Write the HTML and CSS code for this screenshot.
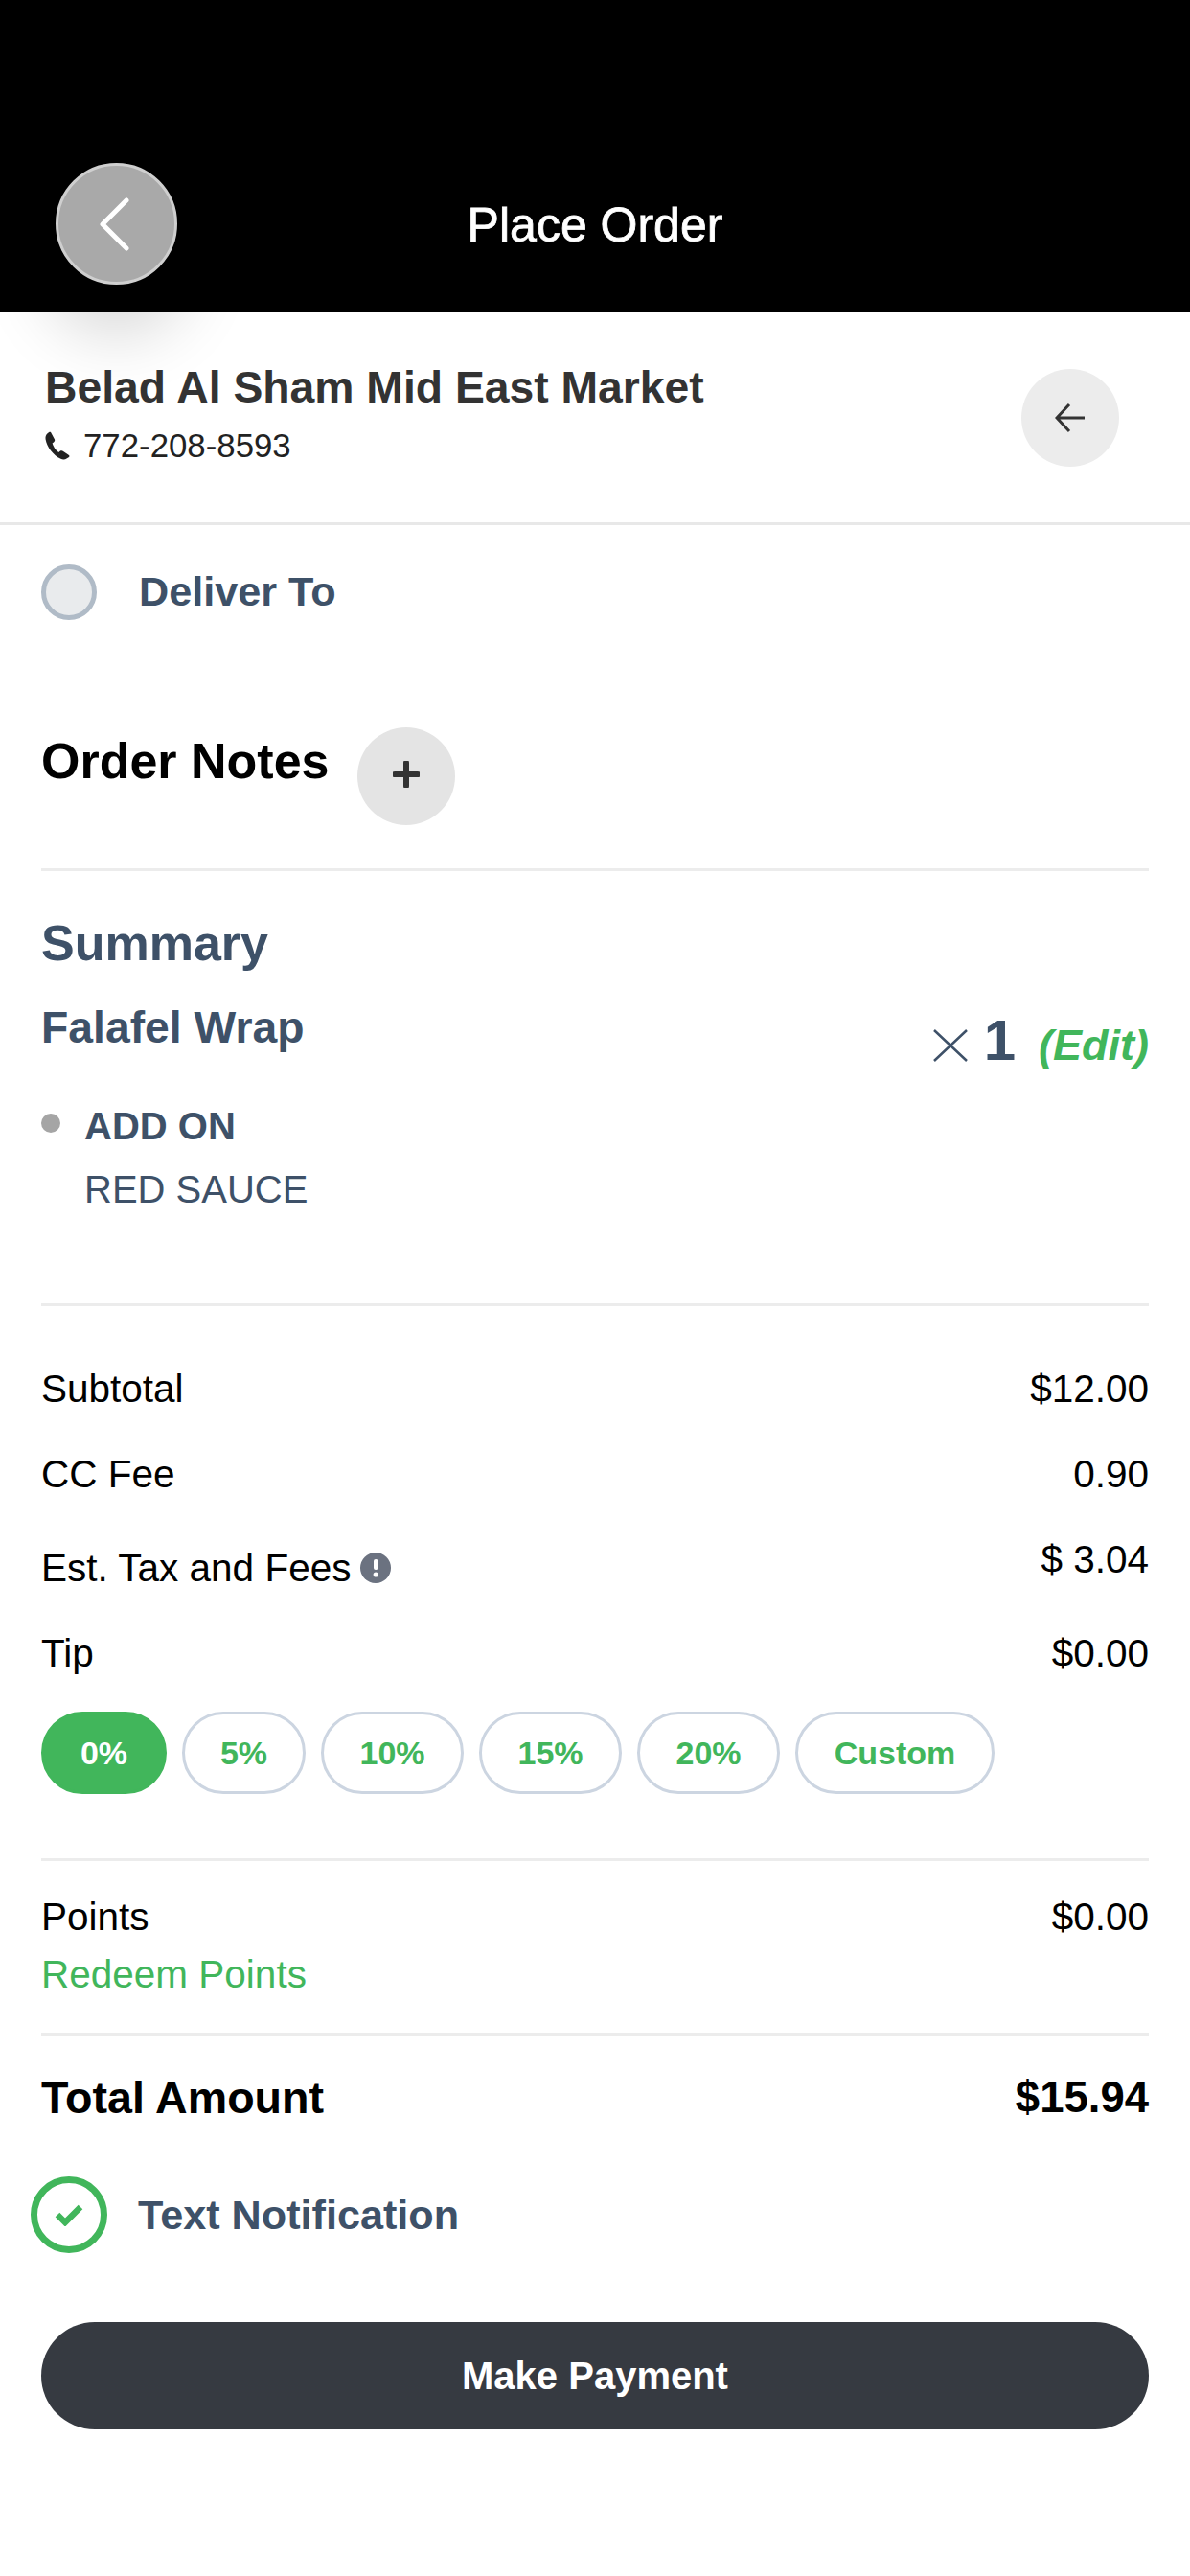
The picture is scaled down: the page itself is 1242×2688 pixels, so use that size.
FILE: index.html
```html
<!DOCTYPE html>
<html lang="en">
<head>
    <meta charset="UTF-8">
    <title>Place Order</title>
    <link rel="stylesheet" href="styles.css">
</head>
<body>
    <header class="top-bar">
        <button class="back-button">
            <svg width="34" height="58" viewBox="0 0 34 58"><path d="M30 4 L5 29 L30 54" fill="none" stroke="#fff" stroke-width="5" stroke-linecap="round" stroke-linejoin="round"/></svg>
        </button>
        <h1>Place Order</h1>
    </header>

    <section class="store">
        <div class="store-info">
            <h2>Belad Al Sham Mid East Market</h2>
            <p class="phone">
                <svg width="28" height="30" viewBox="0 0 28 30"><path d="M7 1 L11 8.5 C11.5 9.6 11 10.6 10 11.4 L8.6 12.6 C9.6 16 12 20 15.2 22 L17 20.6 C18 19.9 19 20 19.7 20.8 L26 25 C26.6 25.6 26.6 26.4 26 26.9 L23.5 28.6 C22 29.6 19.5 29.8 17.5 28.8 C9.5 25 3 16.5 1.6 8.5 C1.2 6 1.8 3.8 3.6 2.2 L5.2 1 C5.8 .5 6.6 .5 7 1 Z" fill="#222"/></svg>
                <span>772-208-8593</span>
            </p>
        </div>
        <button class="round-button arrow-button">
            <svg width="32" height="32" viewBox="0 0 32 32"><path d="M31 16 H2 M15 2 L2 16 L15 30" fill="none" stroke="#333" stroke-width="3"/></svg>
        </button>
    </section>

    <main class="sheet">
        <div class="deliver">
            <span class="radio"></span>
            <span class="option-label">Deliver To</span>
        </div>

        <div class="notes">
            <h2>Order Notes</h2>
            <button class="round-button plus-button">
                <svg width="28" height="28" viewBox="0 0 28 28"><path d="M14 2 V26 M2 14 H26" fill="none" stroke="#333" stroke-width="6" stroke-linecap="round"/></svg>
            </button>
        </div>

        <div class="summary">
            <h2>Summary</h2>
            <div class="item">
                <h3>Falafel Wrap</h3>
                <div class="qty">
                    <svg width="36" height="34" viewBox="0 0 36 34"><path d="M1 1 L35 33 M35 1 L1 33" fill="none" stroke="#3e5168" stroke-width="2.5"/></svg>
                    <span class="qty-num">1</span>
                    <span class="edit">(Edit)</span>
                </div>
            </div>
            <div class="addon">
                <span class="dot"></span>
                <div>
                    <p class="addon-title">ADD ON</p>
                    <p class="addon-value">RED SAUCE</p>
                </div>
            </div>
        </div>

        <div class="totals">
            <div class="line"><span>Subtotal</span><span>$12.00</span></div>
            <div class="line"><span>CC Fee</span><span>0.90</span></div>
            <div class="line tax">
                <span class="tax-label">Est. Tax and Fees
                    <svg width="32" height="32" viewBox="0 0 32 32"><circle cx="16" cy="16" r="16" fill="#6b7280"/><rect x="14" y="7" width="4.5" height="11" rx="2" fill="#fff"/><circle cx="16.2" cy="23" r="2.6" fill="#fff"/></svg>
                </span>
                <span>$ 3.04</span>
            </div>
            <div class="line"><span>Tip</span><span>$0.00</span></div>
            <div class="tips">
                <span class="tip active">0%</span>
                <span class="tip narrow">5%</span>
                <span class="tip wide">10%</span>
                <span class="tip wide">15%</span>
                <span class="tip wide">20%</span>
                <span class="tip custom">Custom</span>
            </div>
        </div>

        <div class="points">
            <div class="line"><span>Points</span><span>$0.00</span></div>
            <a class="redeem">Redeem Points</a>
        </div>

        <div class="line total"><span>Total Amount</span><span class="total-value">$15.94</span></div>

        <div class="notify">
            <span class="check">
                <svg width="30" height="24" viewBox="0 0 30 24"><path d="M3 12 L11 20 L27 4" fill="none" stroke="#41b65b" stroke-width="6.5"/></svg>
            </span>
            <span class="option-label">Text Notification</span>
        </div>

        <button class="pay-button">Make Payment</button>
    </main>
</body>
</html>
```

FILE: styles.css
```css
* {
    margin: 0;
    padding: 0;
    box-sizing: border-box;
}

body {
    font-family: 'Liberation Sans', Arial, sans-serif;
    background: #ffffff;
    color: #000;
    width: 1242px;
    height: 2688px;
    overflow: hidden;
}

button {
    border: none;
    font-family: inherit;
    display: flex;
    align-items: center;
    justify-content: center;
}

.top-bar {
    position: relative;
    z-index: 2;
    height: 326px;
    background: #000;
    padding: 170px 58px 29px;
    display: grid;
    grid-template-columns: 1fr auto 1fr;
    align-items: center;
}

.top-bar h1 {
    grid-column: 2;
    grid-row: 1;
    font-size: 50px;
    font-weight: 400;
    color: #fff;
    -webkit-text-stroke: 0.8px #fff;
    margin-top: 2px;
}

.back-button {
    grid-column: 1;
    grid-row: 1;
    width: 127px;
    height: 127px;
    border-radius: 50%;
    background: #a9a9a9;
    border: 3px solid #cfcfcf;
    box-shadow: 0 40px 70px 12px rgba(0, 0, 0, 0.16);
    padding-right: 6px;
}

.store {
    height: 222px;
    border-bottom: 3px solid #e8e8e8;
    padding: 59px 74px 0 47px;
    display: flex;
    justify-content: space-between;
    align-items: flex-start;
}

.store h2 {
    font-size: 46.3px;
    line-height: 56px;
    color: #333;
    margin-top: -9px;
}

.phone {
    display: flex;
    align-items: center;
    gap: 13px;
    font-size: 34.8px;
    line-height: 40px;
    color: #222;
    margin-top: 13px;
    margin-left: -1px;
}

.round-button {
    width: 102px;
    height: 102px;
    border-radius: 50%;
}

.arrow-button {
    background: #ececec;
}

.sheet {
    padding: 41px 43px 0;
}

.deliver {
    display: flex;
    align-items: center;
    gap: 44px;
}

.deliver .option-label {
    padding-bottom: 2px;
}

.radio {
    width: 58px;
    height: 58px;
    border-radius: 50%;
    background: #e9ebed;
    border: 5px solid #b0bbc7;
}

.option-label {
    font-size: 43.2px;
    font-weight: 700;
    color: #3e5168;
}

.notes {
    margin-top: 112px;
    padding-bottom: 45px;
    border-bottom: 3px solid #ececec;
    display: flex;
    gap: 29px;
}

.notes h2 {
    font-size: 52px;
    line-height: 60px;
    margin-top: 5px;
}

.plus-button {
    background: #e4e4e4;
    padding-bottom: 4px;
}

.summary {
    padding: 45px 0 95px;
    border-bottom: 3px solid #ececec;
    color: #3e5168;
}

.summary h2 {
    font-size: 52px;
    line-height: 60px;
}

.item {
    margin-top: 30px;
    height: 56px;
    display: flex;
    justify-content: space-between;
    align-items: flex-start;
}

.item h3 {
    font-size: 46.3px;
    line-height: 56px;
}

.qty {
    display: flex;
    align-items: center;
    height: 70px;
    margin-top: 12px;
}

.qty-num {
    font-size: 60px;
    font-weight: 700;
    margin-left: 17px;
    margin-top: -11px;
}

.edit {
    font-size: 45px;
    font-weight: 700;
    font-style: italic;
    color: #41b65b;
    margin-left: 24px;
}

.addon {
    margin-top: 51px;
    display: flex;
    gap: 25px;
}

.dot {
    width: 20px;
    height: 20px;
    border-radius: 50%;
    background: #a5a5a5;
    margin-top: 11px;
}

.addon p {
    font-size: 40px;
    line-height: 48px;
}

.addon-title {
    font-weight: 700;
}

.addon-value {
    margin-top: 18px;
}

.line {
    display: flex;
    justify-content: space-between;
    align-items: flex-start;
    font-size: 40.5px;
    line-height: 48px;
}

.totals {
    padding: 62px 0 67px;
    border-bottom: 3px solid #ececec;
    display: flex;
    flex-direction: column;
    gap: 41px;
}

.tax-label {
    margin-top: 9px;
    display: flex;
    align-items: center;
    gap: 10px;
}

.tips {
    display: flex;
    gap: 16px;
    margin-top: -4px;
}

.tip {
    width: 131px;
    height: 86px;
    border: 3px solid #ccd5e1;
    border-radius: 43px;
    font-size: 34px;
    font-weight: 700;
    color: #41b65b;
    display: flex;
    align-items: center;
    justify-content: center;
}

.tip.active {
    background: #41b65b;
    border-color: #41b65b;
    color: #fff;
}

.tip.narrow {
    width: 129px;
}

.tip.wide {
    width: 149px;
}

.tip.custom {
    width: 208px;
}

.points {
    padding: 34px 0 37px;
    border-bottom: 3px solid #ececec;
}

.redeem {
    display: block;
    margin-top: 12px;
    font-size: 40.5px;
    line-height: 48px;
    color: #41b65b;
}

.total {
    margin-top: 37px;
    font-size: 46.6px;
    line-height: 56px;
    font-weight: 700;
}

.total-value {
    font-size: 45.5px;
}

.notify {
    margin: 54px 0 0 -11px;
    display: flex;
    align-items: center;
    gap: 32px;
}

.check {
    width: 80px;
    height: 80px;
    border-radius: 50%;
    border: 7px solid #41b65b;
    display: flex;
    align-items: center;
    justify-content: center;
}

.pay-button {
    margin-top: 72px;
    width: 100%;
    height: 112px;
    border-radius: 56px;
    background: #363a41;
    color: #fff;
    font-size: 40px;
    font-weight: 700;
}
```
